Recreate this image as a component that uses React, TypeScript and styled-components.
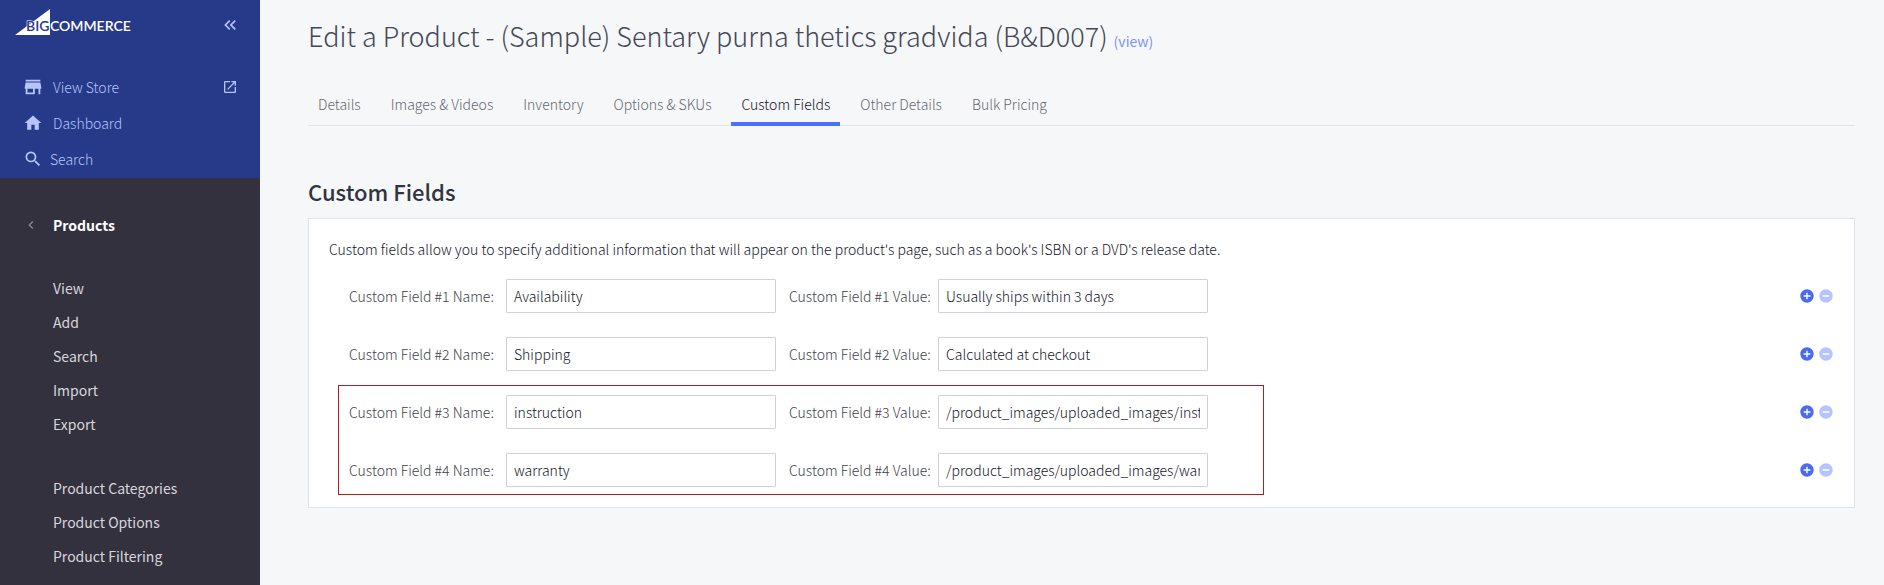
import React from "react";
import styled, { createGlobalStyle } from "styled-components";
import {
  MdStore,
  MdHome,
  MdSearch,
  MdOpenInNew,
  MdKeyboardDoubleArrowLeft,
  MdChevronLeft,
  MdAddCircle,
  MdRemoveCircle,
} from "react-icons/md";

const GlobalStyle = createGlobalStyle`
  *, *::before, *::after { box-sizing: border-box; }
  body {
    margin: 0;
    background: #f6f7f9;
    color: #313440;
    font-family: "Noto Sans CJK SC", "Open Sans", sans-serif;
    font-size: 14px;
    line-height: 20px;
  }
  a { color: inherit; text-decoration: none; }
`;

const Page = styled.div`
  display: flex;
  min-height: 100vh;
`;

const Sidebar = styled.aside`
  flex: none;
  width: 260px;
  background: #34313f;
`;

const StoreNav = styled.div`
  padding: 8px 22px 0;
  height: 178px;
  background: #273a8a;
  color: #b6c4fb;
`;

const Brand = styled.div`
  display: flex;
  align-items: center;
  justify-content: space-between;
  height: 34px;
  margin: 0 -2px 0 -8px;
`;

const IconButton = styled.button`
  display: flex;
  padding: 0;
  border: 0;
  background: none;
  color: inherit;
  cursor: pointer;
`;

const StoreLinks = styled.nav`
  display: flex;
  flex-direction: column;
  margin-top: 27px;
`;

const StoreLink = styled.a<{ $gap?: number }>`
  display: flex;
  align-items: center;
  gap: ${(p) => p.$gap ?? 9}px;
  height: 36px;
  font-size: 14px;
  font-weight: 300;

  > svg { margin-left: auto; }
`;

const IconSlot = styled.span`
  display: flex;
  justify-content: center;
  flex: none;
  width: 22px;
`;

const SectionHeader = styled.div`
  display: flex;
  align-items: center;
  gap: 14px;
  margin: 35px 0 34px;
  padding-left: 23px;
  height: 24px;
  color: #fff;
  font-weight: 700;

  button { color: #8b8994; }
`;

const MenuGroup = styled.nav`
  display: flex;
  flex-direction: column;
  margin-bottom: 30px;
  padding-left: 53px;
`;

const MenuLink = styled.a`
  height: 34px;
  line-height: 34px;
  color: #d7d6dc;
`;

const Main = styled.main`
  flex: 1;
  min-width: 0;
  padding: 13px 29px 0 48px;
`;

const Title = styled.h1`
  margin: 0;
  font-size: 27px;
  line-height: 46px;
  font-weight: 200;
  color: #454856;

  a { font-size: 14px; line-height: 14px; font-weight: 400; color: #7f93f2; }
`;

const Tabs = styled.nav`
  display: flex;
  gap: 10px;
  margin-top: 25px;
  height: 42px;
  border-bottom: 1px solid #e1e4ea;
`;

const Tab = styled.a<{ $active?: boolean }>`
  height: 42px;
  padding: 0 10px;
  line-height: 40px;
  font-weight: 300;
  color: ${(p) => (p.$active ? "#14161f" : "#666872")};
  border-bottom: 4px solid ${(p) => (p.$active ? "#4b71fc" : "transparent")};
`;

const SectionTitle = styled.h2`
  margin: 49px 0 11px;
  font-size: 22px;
  line-height: 32px;
  font-weight: 500;
`;

const Panel = styled.form`
  padding: 20px;
  border: 1px solid #dfe3eb;
  background: #fff;
`;

const Intro = styled.p`
  margin: 0;
  font-weight: 300;
  color: #14161f;
`;

const Rows = styled.div`
  display: flex;
  flex-direction: column;
  gap: 24px;
  margin-top: 20px;
  padding-left: 20px;
`;

const Highlighted = styled(Rows)`
  position: relative;
  margin-top: 24px;

  &::before {
    content: "";
    position: absolute;
    top: -10px;
    bottom: -8px;
    left: 9px;
    width: 926px;
    border: 1px solid #b02020;
    pointer-events: none;
  }
`;

const Row = styled.div`
  display: flex;
  align-items: center;
  height: 34px;
`;

const Label = styled.label<{ $width: number }>`
  flex: none;
  width: ${(p) => p.$width}px;
  font-weight: 300;
  color: #3e4049;
`;

const TextInput = styled.input`
  width: 270px;
  height: 34px;
  margin-right: 13px;
  padding: 0 7px;
  border: 1px solid #cfd2d9;
  border-radius: 1px;
  background: #fff;
  color: #14161f;
  font: inherit;
  font-weight: 300;
`;

const Actions = styled.div`
  display: flex;
  gap: 3px;
  margin-left: auto;
  color: #4b6bee;

  button:last-child { color: #b6c4fb; }
`;

const LogoText = styled.text`
  font-family: Lato, sans-serif;
  font-size: 14px;
  font-weight: 600;
`;

const Logo = () => (
  <svg width="118" height="34" viewBox="0 0 118 34" role="img" aria-label="BigCommerce">
    <path d="M1 27 L36 1 V27 Z" fill="#fff" />
    <LogoText x="12" y="23" fill="#273a8a" stroke="#fff" strokeWidth="1" paintOrder="stroke">BIG</LogoText>
    <LogoText x="36" y="23" fill="#fff">COMMERCE</LogoText>
  </svg>
);

const fields = [
  { name: "Availability", value: "Usually ships within 3 days" },
  { name: "Shipping", value: "Calculated at checkout" },
  { name: "instruction", value: "/product_images/uploaded_images/instruction.pdf" },
  { name: "warranty", value: "/product_images/uploaded_images/warranty.pdf" },
];

const FieldRow = ({ index }: { index: number }) => {
  const n = index + 1;
  return (
    <Row>
      <Label $width={157} htmlFor={`name-${n}`}>Custom Field #{n} Name:</Label>
      <TextInput id={`name-${n}`} defaultValue={fields[index].name} />
      <Label $width={149} htmlFor={`value-${n}`}>Custom Field #{n} Value:</Label>
      <TextInput id={`value-${n}`} defaultValue={fields[index].value} />
      <Actions>
        <IconButton type="button" aria-label="Add field"><MdAddCircle size={16} /></IconButton>
        <IconButton type="button" aria-label="Remove field"><MdRemoveCircle size={16} /></IconButton>
      </Actions>
    </Row>
  );
};

const tabs = ["Details", "Images & Videos", "Inventory", "Options & SKUs", "Custom Fields", "Other Details", "Bulk Pricing"];

export default function App() {
  return (
    <Page>
      <GlobalStyle />
      <Sidebar>
        <StoreNav>
          <Brand>
            <Logo />
            <IconButton aria-label="Collapse menu"><MdKeyboardDoubleArrowLeft size={20} /></IconButton>
          </Brand>
          <StoreLinks>
            <StoreLink href="#"><IconSlot><MdStore size={22} /></IconSlot>View Store<MdOpenInNew size={16} /></StoreLink>
            <StoreLink href="#"><IconSlot><MdHome size={20} /></IconSlot>Dashboard</StoreLink>
            <StoreLink href="#" $gap={6}><IconSlot><MdSearch size={20} /></IconSlot>Search</StoreLink>
          </StoreLinks>
        </StoreNav>
        <SectionHeader>
          <IconButton aria-label="Back"><MdChevronLeft size={16} /></IconButton>
          Products
        </SectionHeader>
        <MenuGroup>
          {["View", "Add", "Search", "Import", "Export"].map((t) => <MenuLink key={t} href="#">{t}</MenuLink>)}
        </MenuGroup>
        <MenuGroup>
          {["Product Categories", "Product Options", "Product Filtering"].map((t) => <MenuLink key={t} href="#">{t}</MenuLink>)}
        </MenuGroup>
      </Sidebar>
      <Main>
        <Title>
          Edit a Product - (Sample) Sentary purna thetics gradvida (B&amp;D007) <a href="#">(view)</a>
        </Title>
        <Tabs>
          {tabs.map((t) => <Tab key={t} href="#" $active={t === "Custom Fields"}>{t}</Tab>)}
        </Tabs>
        <SectionTitle>Custom Fields</SectionTitle>
        <Panel>
          <Intro>
            Custom fields allow you to specify additional information that will appear on the product's page, such as a book's ISBN or a DVD's release date.
          </Intro>
          <Rows>
            <FieldRow index={0} />
            <FieldRow index={1} />
          </Rows>
          <Highlighted>
            <FieldRow index={2} />
            <FieldRow index={3} />
          </Highlighted>
        </Panel>
      </Main>
    </Page>
  );
}
